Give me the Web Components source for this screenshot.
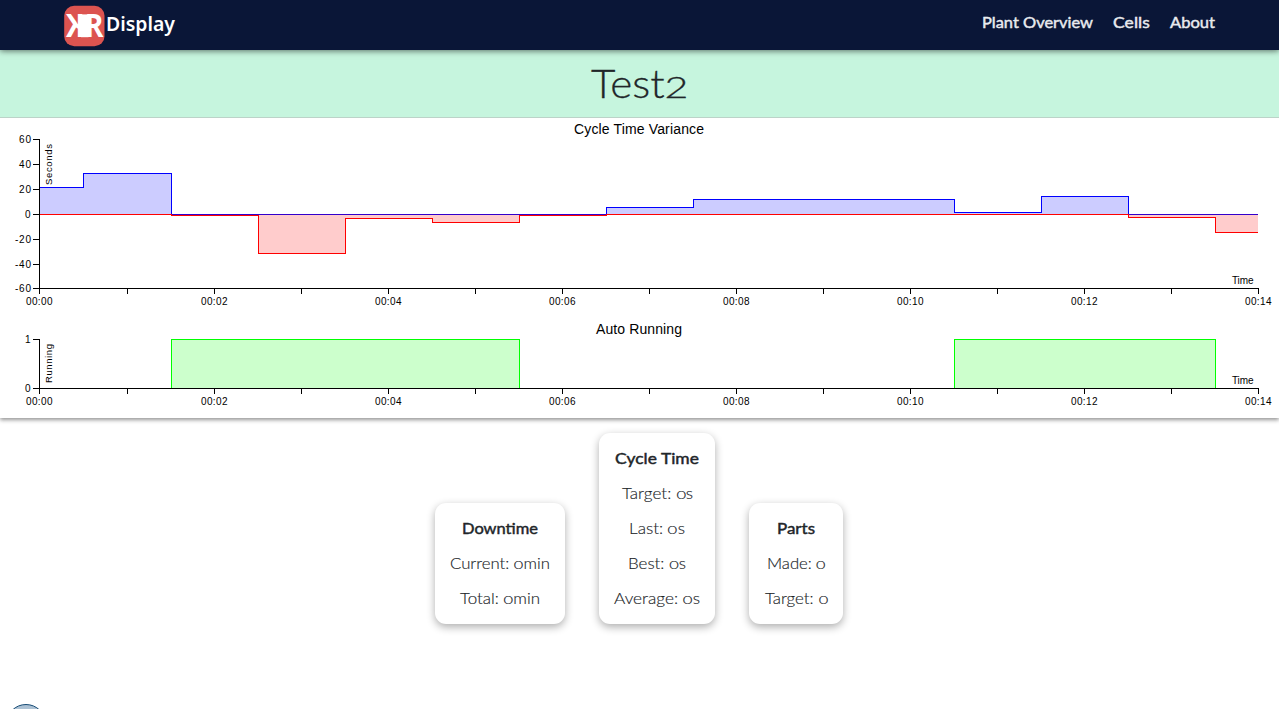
<!DOCTYPE html>
<html lang="en"><head><meta charset="utf-8"><title>KR Display</title>
<style>html,body{margin:0;height:100%;overflow:hidden;background:#fff}body{font:300 16px/1.5 Lato,"Open Sans",sans-serif;color:#212529}</style></head>
<body><kr-page></kr-page>
<script>
// Text set to a given width, partly by widening the glyphs and partly by letter spacing.
// Digits are drawn old-style (x-height).
class KrText extends HTMLElement{
  connectedCallback(){
    if(this.shadowRoot)return;
    const t=this.getAttribute('text'),w=+this.getAttribute('w');
    this.attachShadow({mode:'open'}).innerHTML=`<style>:host{display:inline-block;white-space:nowrap;text-align:left;width:${w}px}.t{display:inline-block;transform-origin:0 50%}.n{display:inline-block;font-size:.76em;line-height:1;transform:scaleX(1.28);margin:0 .09em}</style><span class="t">${t.replace(/\d/g,'<span class="n">$&</span>')}</span>`;
    const s=this.shadowRoot.querySelector('.t'),n=s.getBoundingClientRect().width,k=Math.min(1.09,Math.max(.94,w/n));
    s.style.letterSpacing=((w/k-n)/t.length).toFixed(3)+'px';
    s.style.transform=`scaleX(${k.toFixed(4)})`;
  }
}
class KrLogo extends HTMLElement{
  constructor(){super();this.attachShadow({mode:'open'}).innerHTML=`<style>:host{display:block;height:50px}svg{display:block}</style>
<svg width="116" height="50"><rect x=".2" y="5.8" width="40.3" height="40.4" rx="10" fill="#dc5450"/>
<g font-family="Open Sans" font-weight="700" font-size="32" fill="#fff">
<text transform="translate(20.7 37.2) scale(-1 1)" textLength="18.7" lengthAdjust="spacingAndGlyphs">K</text>
<text x="20.7" y="37.2" textLength="18.7" lengthAdjust="spacingAndGlyphs">R</text></g>
<rect x="17" y="14.4" width="7.5" height="22.8" fill="#fff"/>
<text x="42" y="31" font-family="Noto Sans" font-weight="600" font-size="19" fill="#fff" textLength="69" lengthAdjust="spacingAndGlyphs">Display</text></svg>`}
}
class KrHeader extends HTMLElement{
  constructor(){super();this.attachShadow({mode:'open'}).innerHTML=`<style>:host{display:flex;justify-content:space-between;height:50px;padding:0 64px;box-sizing:border-box;background:#0a1637;box-shadow:0 1px 6px rgba(0,0,0,.55);position:relative;z-index:2}
nav{display:flex;gap:20px;padding-top:10px;color:#e9ebef;font-weight:400;-webkit-text-stroke:.45px}</style>
<kr-logo></kr-logo><nav><kr-text text="Plant Overview" w="111"></kr-text><kr-text text="Cells" w="37"></kr-text><kr-text text="About" w="45"></kr-text></nav>`}
}
class KrTitle extends HTMLElement{
  constructor(){super();this.attachShadow({mode:'open'}).innerHTML=`<style>:host{display:block;height:67px;background:#c6f5de;border-bottom:1px solid #bcd3c8;text-align:center;font-size:40px;line-height:67px;-webkit-text-stroke:.3px}</style><kr-text text="Test2" w="98"></kr-text>`}
}
// Step chart; each series is a list of [x, y] corners measured in chart pixels.
class KrChart extends HTMLElement{
  connectedCallback(){
    if(this.shadowRoot)return;
    const a=n=>this.getAttribute(n),h=+a('h'),base=+a('base'),top=21,J=s=>JSON.parse(s);
    let g='';
    for(const s of J(a('series'))){
      let d='',p=s.p;
      p.forEach(([x,y],i)=>{d+=i?`H${x+.5}V${y+.5}`:`M${x+.5} ${y+.5}`});
      d+=`H${s.end}`;
      for(let i=0;i<p.length;i++){
        const x=p[i][0],e=i+1<p.length?p[i+1][0]:s.end,y=p[i][1];
        g+=`<rect x="${x}" y="${Math.min(y,s.zero)}" width="${e-x}" height="${Math.abs(y-s.zero)+(s.c==='red'?1:0)}" fill="${s.c}" fill-opacity=".2"/>`;
      }
      g+=`<path d="${d}" fill="none" stroke="${s.c}" ${s.clip?'clip-path="url(#c)"':''}/>`;
    }
    let ax=`<path d="M33 ${top+.5}H39.5V${base+.5}M33 ${base+.5}H1259" fill="none" stroke="#000"/>`,tx='';
    for(const [v,y] of J(a('ticks'))){
      ax+=`<path d="M33 ${y+.5}h6" stroke="#000"/>`;
      tx+=`<text x="${v===0||v===1?25:v<0?15:19}" y="${y+4}" ${v===0||v===1?'':`textLength="${v<0?16:12}"`}>${v}</text>`;
    }
    [39,127,214,301,388,475,562,649,736,823,910,997,1084,1171,1258].forEach((x,i)=>{
      ax+=`<path d="M${x+.5} ${base}v6" stroke="#000"/>`;
      if(i%2===0)tx+=`<text x="${x-13}" y="${base+17}" textLength="26.5">00:${String(i).padStart(2,'0')}</text>`;
    });
    const [t,x0,tw]=J(a('heading')),[lab,lw]=J(a('label'));
    this.attachShadow({mode:'open'}).innerHTML=`<style>:host{display:block;height:${h}px}svg{display:block;font:10px "Liberation Sans",Arial,sans-serif;fill:#000}path,rect{shape-rendering:crispEdges}</style>
<svg width="1279" height="${h}"><clipPath id="c"><rect width="1279" height="${base}"/></clipPath>${g}${ax}${tx}
<text x="${x0}" y="16" font-size="14" textLength="${tw}">${t}</text>
<text x="1232" y="${base-4}" textLength="21.5">Time</text>
<text transform="translate(52 ${top+5+lw}) rotate(-90)" textLength="${lw}" font-size="9.5">${lab}</text></svg>`;
  }
}
class KrCard extends HTMLElement{
  connectedCallback(){
    if(this.shadowRoot)return;
    this.attachShadow({mode:'open'}).innerHTML=`<style>:host{display:block;box-sizing:border-box;padding:7px 0 9px;border-radius:11px;background:#fff;box-shadow:0 3px 9px rgba(0,0,0,.32);text-align:center;line-height:35px;-webkit-text-stroke:.15px}div{height:35px}.h{font-weight:400;-webkit-text-stroke:.45px}</style>`+
    JSON.parse(this.getAttribute('rows')).map(([t,w],i)=>`<div class="${i?'':'h'}"><kr-text text="${t}" w="${w}"></kr-text></div>`).join('');
  }
}
class KrPage extends HTMLElement{
  constructor(){super();this.attachShadow({mode:'open'}).innerHTML=`<style>:host{display:block;width:1279px;height:709px;overflow:hidden;position:relative}
.charts{background:#fff;box-shadow:0 2px 4px rgba(0,0,0,.42);clip-path:inset(0 0 -10px 0)}
.cards{display:flex;justify-content:center;align-items:flex-end;gap:34px;height:206px;width:1278px}
.dot{position:absolute;left:6px;top:704px;width:38px;height:38px;border:1px solid #164b75;border-radius:50%;background:linear-gradient(#a9bfd2,#d5e2ec)}</style>
<kr-header></kr-header><kr-title></kr-title>
<div class="charts">
<kr-chart h="200" base="170" heading='["Cycle Time Variance",574,130]' label='["Seconds",41]' ticks='[[60,21],[40,46],[20,71],[0,96],[-20,121],[-40,146],[-60,170]]'
series='[{"c":"blue","zero":96,"end":1258,"p":[[39,69],[83,55],[171,96],[606,89],[693,81],[954,94],[1041,78],[1128,96]]},{"c":"red","zero":96,"end":1258,"p":[[39,96],[171,97],[258,135],[345,100],[432,104],[519,97],[606,96],[1128,99],[1215,114]]}]'></kr-chart>
<kr-chart h="100" base="70" heading='["Auto Running",596,86]' label='["Running",39]' ticks='[[1,21],[0,70]]'
series='[{"c":"#0f0","zero":70,"end":1258,"clip":1,"p":[[39,70],[171,21],[519,70],[954,21],[1215,70]]}]'></kr-chart></div>
<div class="cards">
<kr-card style="width:130px" rows='[["Downtime",76],["Current: 0min",100],["Total: 0min",80]]'></kr-card>
<kr-card style="width:116px" rows='[["Cycle Time",84],["Target: 0s",71],["Last: 0s",56],["Best: 0s",58],["Average: 0s",86]]'></kr-card>
<kr-card style="width:94px" rows='[["Parts",38],["Made: 0",59],["Target: 0",63]]'></kr-card></div>
<div class="dot"></div>`}
}
customElements.define('kr-text',KrText);
customElements.define('kr-logo',KrLogo);
customElements.define('kr-header',KrHeader);
customElements.define('kr-title',KrTitle);
customElements.define('kr-chart',KrChart);
customElements.define('kr-card',KrCard);
customElements.define('kr-page',KrPage);
</script></body></html>
